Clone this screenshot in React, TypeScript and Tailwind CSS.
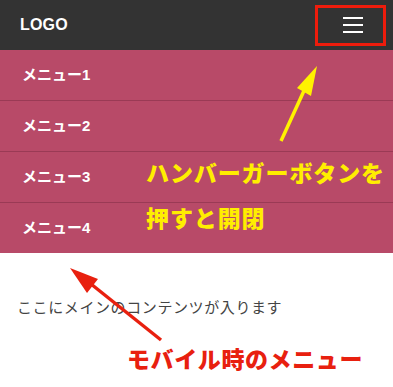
import React from 'react';

const menus = ['メニュー1', 'メニュー2', 'メニュー3', 'メニュー4'];

export default function App() {
  return (
    <div className="relative w-[393px] h-[387px] overflow-hidden bg-white font-['Liberation_Sans','Noto_Sans_CJK_JP',sans-serif]">
      {/* Header */}
      <header className="h-[50px] bg-[#333333] flex items-center justify-between pl-5 pr-[7px]">
        <span className="text-white text-[16px] font-bold tracking-[0.2px]">LOGO</span>
        <button className="w-[71px] h-[41px] border-[3px] border-[#ee1c0c] flex flex-col items-center justify-center gap-[5px] pl-[5px]">
          <span className="block w-[20px] h-[2px] bg-white" />
          <span className="block w-[20px] h-[2px] bg-white" />
          <span className="block w-[20px] h-[2px] bg-white" />
        </button>
      </header>

      {/* Mobile menu */}
      <nav className="bg-[#b84a68]">
        {menus.map((m, i) => (
          <div
            key={m}
            className={
              i < menus.length - 1
                ? 'h-[51px] flex items-center pl-[22px] text-white text-[15px] font-bold border-b border-[#9a3a55]'
                : 'h-[50px] flex items-center pl-[22px] text-white text-[15px] font-bold'
            }
          >
            {m}
          </div>
        ))}
      </nav>

      {/* Content */}
      <main className="pt-[44px] px-[17px]">
        <p className="text-[15px] leading-[22px] text-[#444444] tracking-[0.6px]">ここにメインのコンテンツが入ります</p>
      </main>

      {/* Annotations */}
      <svg className="absolute inset-0 pointer-events-none" width="393" height="387">
        <line x1="281" y1="141" x2="308" y2="82" stroke="#fff200" strokeWidth="3.5" />
        <polygon points="317,66 297,88 311,96" fill="#fff200" />
        <line x1="161" y1="340" x2="86" y2="280" stroke="#e8200f" strokeWidth="3.5" />
        <polygon points="70,268 98,279 87,293" fill="#e8200f" />
      </svg>
      <div className="absolute left-[146px] top-[157px] text-[#ffee00] text-[23px] leading-[30px] font-black tracking-[0.9px] whitespace-nowrap font-['Noto_Sans_CJK_JP',sans-serif]">
        ハンバーガーボタンを
      </div>
      <div className="absolute left-[146px] top-[202px] text-[#ffee00] text-[23px] leading-[30px] font-black tracking-[0.9px] whitespace-nowrap font-['Noto_Sans_CJK_JP',sans-serif]">
        押すと開閉
      </div>
      <div className="absolute left-[127px] top-[343px] text-[#e8200f] text-[23px] leading-[30px] font-black tracking-[0.6px] whitespace-nowrap font-['Noto_Sans_CJK_JP',sans-serif]">
        モバイル時のメニュー
      </div>
    </div>
  );
}
